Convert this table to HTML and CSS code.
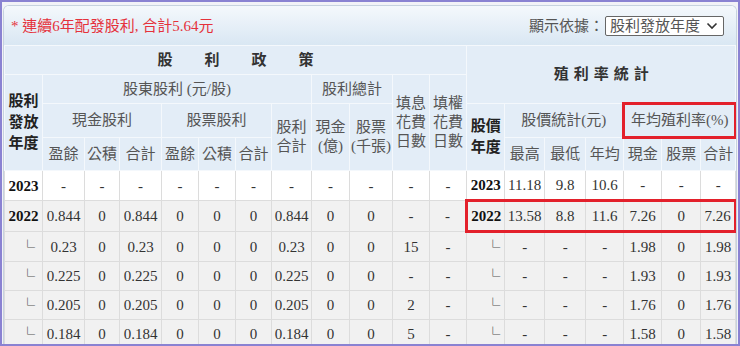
FILE: index.html
```
<!DOCTYPE html>
<html lang="zh-Hant">
<head>
<meta charset="utf-8">
<link rel="stylesheet" href="styles.css">
</head>
<body>
<div class="frame">
  <div class="panel">
    <div class="topbar">
      <span class="note">* 連續6年配發股利, 合計5.64元</span>
      <div class="pick">
        <span class="lbl">顯示依據：</span>
        <span class="sel">股利發放年度<svg class="chev" width="12" height="8" viewBox="0 0 12 8"><polyline points="1.5,1.5 6,6 10.5,1.5" fill="none" stroke="#333" stroke-width="1.6"/></svg></span>
      </div>
    </div>
    <table class="grid">
      <colgroup>
        <col class="w38"><col class="w42"><col class="w35"><col class="w42"><col class="w37"><col class="w37"><col class="w36"><col class="w40"><col class="w38"><col class="w43"><col class="w37"><col class="w37"><col class="w38"><col class="w40"><col class="w41"><col class="w38"><col class="w38"><col class="w39"><col class="w35">
      </colgroup>
      <thead>
        <tr class="h1">
          <th colspan="12" class="title">股利政策</th>
          <th colspan="7" rowspan="2" class="title2">殖利率統計</th>
        </tr>
        <tr class="h2">
          <th rowspan="3" class="yr">股利<br>發放<br>年度</th>
          <th colspan="7">股東股利 (元/股)</th>
          <th colspan="2">股利總計</th>
          <th rowspan="3">填息<br>花費<br>日數</th>
          <th rowspan="3">填權<br>花費<br>日數</th>
        </tr>
        <tr class="h3">
          <th colspan="3">現金股利</th>
          <th colspan="3">股票股利</th>
          <th rowspan="2">股利<br>合計</th>
          <th rowspan="2">現金<br>(億)</th>
          <th rowspan="2">股票<br>(千張)</th>
          <th rowspan="2" class="yr">股價<br>年度</th>
          <th colspan="3">股價統計(元)</th>
          <th colspan="3" class="mark">年均殖利率(%)</th>
        </tr>
        <tr class="h4">
          <th>盈餘</th><th>公積</th><th>合計</th><th>盈餘</th><th>公積</th><th>合計</th>
          <th>最高</th><th>最低</th><th>年均</th><th>現金</th><th>股票</th><th>合計</th>
        </tr>
      </thead>
      <tbody>
        <tr class="white">
          <td class="y">2023</td><td>-</td><td>-</td><td>-</td><td>-</td><td>-</td><td>-</td><td>-</td><td>-</td><td>-</td><td>-</td><td>-</td>
          <td class="y">2023</td><td>11.18</td><td>9.8</td><td>10.6</td><td>-</td><td>-</td><td>-</td>
        </tr>
        <tr class="gray hl">
          <td class="y">2022</td><td>0.844</td><td>0</td><td>0.844</td><td>0</td><td>0</td><td>0</td><td>0.844</td><td>0</td><td>0</td><td>-</td><td>-</td>
          <td class="y hs">2022</td><td class="hm">13.58</td><td class="hm">8.8</td><td class="hm">11.6</td><td class="hm">7.26</td><td class="hm">0</td><td class="he">7.26</td>
        </tr>
        <tr class="gray">
          <td class="sub">└</td><td>0.23</td><td>0</td><td>0.23</td><td>0</td><td>0</td><td>0</td><td>0.23</td><td>0</td><td>0</td><td>15</td><td>-</td>
          <td class="sub r">└</td><td>-</td><td>-</td><td>-</td><td>1.98</td><td>0</td><td>1.98</td>
        </tr>
        <tr class="gray">
          <td class="sub">└</td><td>0.225</td><td>0</td><td>0.225</td><td>0</td><td>0</td><td>0</td><td>0.225</td><td>0</td><td>0</td><td>-</td><td>-</td>
          <td class="sub r">└</td><td>-</td><td>-</td><td>-</td><td>1.93</td><td>0</td><td>1.93</td>
        </tr>
        <tr class="gray">
          <td class="sub">└</td><td>0.205</td><td>0</td><td>0.205</td><td>0</td><td>0</td><td>0</td><td>0.205</td><td>0</td><td>0</td><td>2</td><td>-</td>
          <td class="sub r">└</td><td>-</td><td>-</td><td>-</td><td>1.76</td><td>0</td><td>1.76</td>
        </tr>
        <tr class="gray">
          <td class="sub">└</td><td>0.184</td><td>0</td><td>0.184</td><td>0</td><td>0</td><td>0</td><td>0.184</td><td>0</td><td>0</td><td>5</td><td>-</td>
          <td class="sub r">└</td><td>-</td><td>-</td><td>-</td><td>1.58</td><td>0</td><td>1.58</td>
        </tr>
      </tbody>
    </table>
  </div>
</div>
</body>
</html>
```
FILE: styles.css
```
html, body {
  margin: 0;
  padding: 0;
  background: #f2f2f7;
}
body {
  font-family: "Liberation Serif", "Noto Sans CJK TC", serif;
  font-size: 15px;
  color: #333;
}
.frame {
  width: 740px;
  height: 346px;
  box-sizing: border-box;
  border: 2px solid #8a82d2;
  background: #f2f2f7;
  padding: 3px 1px 0 1px;
  overflow: hidden;
}
.panel {
  border: 1px solid #c6d2df;
  border-bottom: none;
  border-radius: 6px 6px 0 0;
  background: #fff;
  overflow: hidden;
}
.topbar {
  height: 39px;
  display: flex;
  align-items: center;
  justify-content: space-between;
  padding: 0 12px 0 7px;
  background: linear-gradient(#f4f8fc, #d9e7f3);
}
.note {
  color: #e5323c;
  font-size: 15px;
  line-height: 20px;
}
.pick {
  display: flex;
  align-items: center;
  color: #555;
  line-height: 18px;
}
.lbl {
  margin-right: 1px;
}
.sel {
  display: flex;
  align-items: center;
  gap: 6px;
  height: 18px;
  padding: 0 5px 0 4px;
  border: 1px solid #666;
  border-radius: 2px;
  background: #fff;
  color: #555;
}
.chev {
  display: block;
}
.grid {
  width: 732px;
  table-layout: fixed;
  border-collapse: collapse;
}
.w35 { width: 35px; }
.w36 { width: 36px; }
.w37 { width: 37px; }
.w38 { width: 38px; }
.w39 { width: 39px; }
.w40 { width: 40px; }
.w41 { width: 41px; }
.w42 { width: 42px; }
.w43 { width: 43px; }
.grid th {
  background: #e3edf7;
  border: 1px solid #f4f8fc;
  color: #555;
  font-weight: normal;
  line-height: 19px;
  padding: 0;
  text-align: center;
  vertical-align: middle;
  white-space: nowrap;
}
.grid tr.h1 { height: 29px; }
.grid tr.h2 { height: 29px; }
.grid tr.h3 { height: 34px; }
.grid tr.h4 { height: 33px; }
.grid th.title {
  font-weight: bold;
  color: #333;
  letter-spacing: 32px;
  padding-left: 32px;
}
.grid th.title2 {
  font-weight: bold;
  color: #333;
  letter-spacing: 5px;
  padding-left: 5px;
}
.grid th.yr {
  font-weight: bold;
  color: #222;
  line-height: 21px;
}
.grid th.mark {
  border: 3px solid #e3202b;
}
.grid td {
  height: 28px;
  padding: 0;
  line-height: 20px;
  text-align: center;
  vertical-align: middle;
  border: 1px solid #dcdcdc;
  color: #333;
  white-space: nowrap;
}
.grid tr.white td { background: #fff; }
.grid tr.gray td { background: #f1f1f1; }
.grid td.y {
  font-weight: bold;
  color: #111;
}
.grid td.sub {
  text-align: right;
  padding-right: 7px;
  color: #555;
  font-family: "Noto Sans CJK TC", sans-serif;
  font-size: 15px;
  font-weight: normal;
}
.grid td.sub.r {
  padding-right: 4px;
}
.grid td.hs {
  border: 3px solid #e3202b;
  border-right: 1px solid #dcdcdc;
}
.grid td.hm {
  border-top: 3px solid #e3202b;
  border-bottom: 3px solid #e3202b;
}
.grid td.he {
  border-top: 3px solid #e3202b;
  border-bottom: 3px solid #e3202b;
  border-right: 3px solid #e3202b;
}
```
